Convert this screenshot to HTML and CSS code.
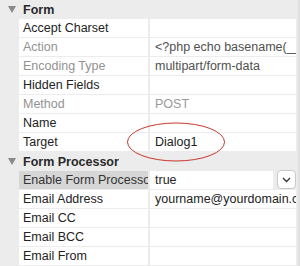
FILE: index.html
```html
<!DOCTYPE html>
<html lang="en">
<head>
    <meta charset="UTF-8">
    <title>Inspector</title>
    <link rel="stylesheet" href="styles.css">
</head>
<body>
    <div class="panel">
        <div class="group">
            <span class="arrow"></span>
            <span class="group-title">Form</span>
        </div>
        <div class="row"><div class="key">Accept Charset</div><div class="val"></div></div>
        <div class="row"><div class="key off">Action</div><div class="val">&lt;?php echo basename(__FILE__); ?&gt;</div></div>
        <div class="row"><div class="key off">Encoding Type</div><div class="val">multipart/form-data</div></div>
        <div class="row"><div class="key">Hidden Fields</div><div class="val"></div></div>
        <div class="row"><div class="key off">Method</div><div class="val light">POST</div></div>
        <div class="row"><div class="key">Name</div><div class="val"></div></div>
        <div class="row"><div class="key">Target</div><div class="val dark">Dialog1</div></div>

        <div class="group">
            <span class="arrow"></span>
            <span class="group-title">Form Processor</span>
        </div>
        <div class="row"><div class="key selected">Enable Form Processor</div>
            <div class="val select">
                <span class="select-text">true</span>
                <span class="select-btn">
                    <svg width="9" height="6" viewBox="0 0 9 6"><path d="M1 1 L4.5 4.5 L8 1" fill="none" stroke="#333" stroke-width="1.3"/></svg>
                </span>
            </div>
        </div>
        <div class="row"><div class="key">Email Address</div><div class="val dark">yourname@yourdomain.com</div></div>
        <div class="row"><div class="key">Email CC</div><div class="val"></div></div>
        <div class="row"><div class="key">Email BCC</div><div class="val"></div></div>
        <div class="row"><div class="key">Email From</div><div class="val"></div></div>

        <svg class="mark" width="100" height="42" viewBox="0 0 100 42">
            <ellipse cx="50" cy="21" rx="48.5" ry="19" fill="none" stroke="#c8372d" stroke-width="1"/>
        </svg>
    </div>
</body>
</html>
```

FILE: styles.css
```css
body {
    margin: 0;
    background-color: #ececec;
    font-family: "Liberation Sans", Arial, sans-serif;
    font-size: 12.5px;
    color: #222;
}

.panel {
    position: relative;
    width: 300px;
    height: 266px;
    overflow: hidden;
    box-sizing: border-box;
    border-right: 2px solid #e0e0e0;
}

.group {
    display: flex;
    align-items: center;
    height: 19px;
    padding-left: 8px;
}

.arrow {
    width: 0;
    height: 0;
    border-left: 4px solid transparent;
    border-right: 4px solid transparent;
    border-top: 7px solid #8a8a8a;
    margin-right: 7px;
}

.group-title {
    font-weight: bold;
    color: #2a2a2a;
}

.row {
    display: grid;
    grid-template-columns: 129px 146px;
    column-gap: 2px;
    height: 18px;
    margin-bottom: 1px;
    padding-left: 19px;
}

.key, .val {
    background-color: #fff;
    line-height: 18px;
    white-space: nowrap;
    overflow: hidden;
}

.key {
    padding-left: 4px;
}

.val {
    padding-left: 5px;
    color: #505050;
}

.off {
    color: #929292;
}

.light {
    color: #9a9a9a;
}

.dark {
    color: #222;
}

.selected {
    background-color: #d6d6d6;
    color: #333;
}

.select {
    display: flex;
    background: transparent;
    padding-left: 0;
    overflow: visible;
}

.select-text {
    background-color: #fff;
    width: 120px;
    padding-left: 5px;
    color: #222;
}

.select-btn {
    display: flex;
    align-items: center;
    justify-content: center;
    width: 17px;
    height: 17px;
    margin-left: 4px;
    margin-top: -1px;
    background-color: #fff;
    border: 1px solid #c9c9c9;
    border-radius: 4px;
}

.mark {
    position: absolute;
    left: 126px;
    top: 121px;
}
```
